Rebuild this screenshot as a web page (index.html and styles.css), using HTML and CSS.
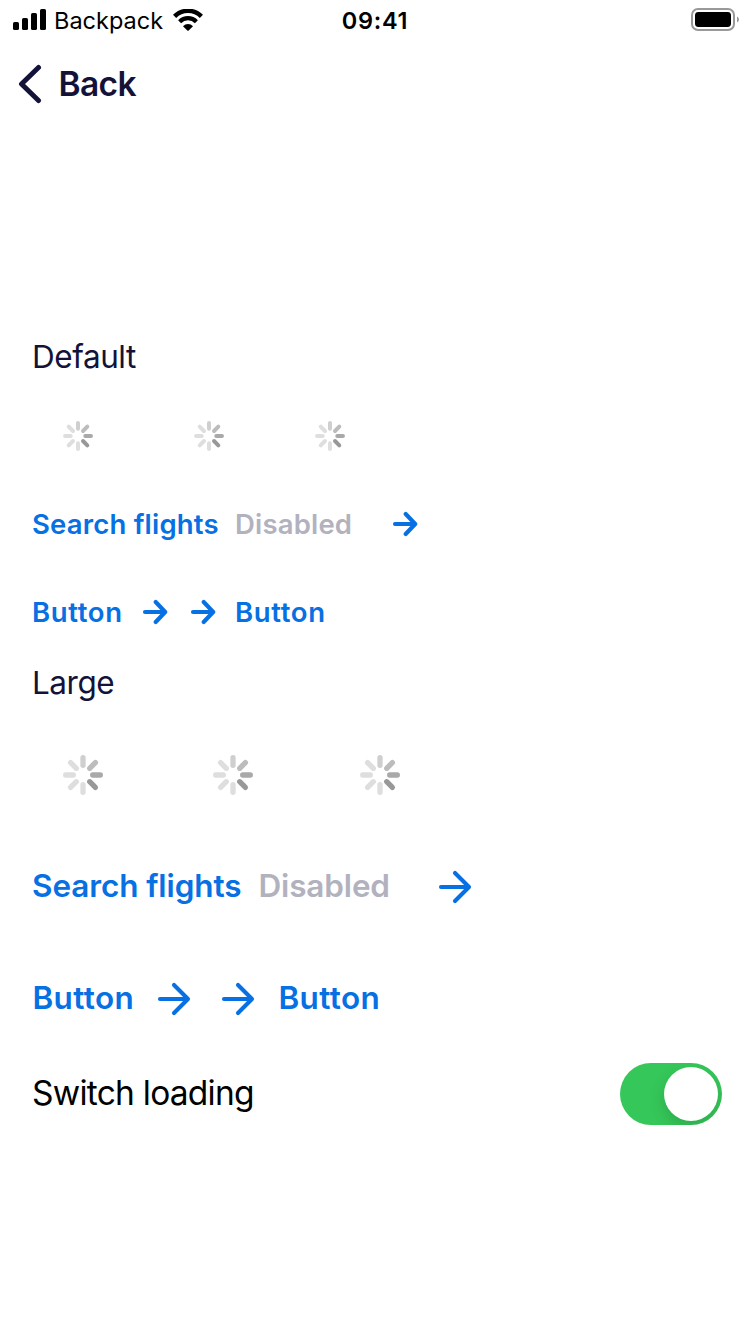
FILE: index.html
```html
<!DOCTYPE html>
<html lang="en">
<head>
<meta charset="utf-8">
<title>Buttons</title>
<link rel="stylesheet" href="styles.css">
</head>
<body>
<svg class="defs" width="0" height="0">
  <symbol id="arrow-small" viewBox="0 0 26 26">
    <path d="M3 13H22.5M13.7 3L23.2 13L13.7 23" fill="none" stroke="currentColor" stroke-width="4.1" stroke-linecap="round" stroke-linejoin="round"/>
  </symbol>
  <symbol id="arrow-large" viewBox="0 0 34 34">
    <path d="M3 17H30.5M17 3L31 17L17 31" fill="none" stroke="currentColor" stroke-width="4.1" stroke-linecap="round" stroke-linejoin="round"/>
  </symbol>
  <symbol id="spinner" viewBox="0 0 40 40">
    <g stroke-width="5.3" stroke-linecap="round">
      <path d="M20 2.7V10.3" stroke="#cfcfd0"/>
      <path d="M32.4 7.6L26.7 13.3" stroke="#bcbcbd"/>
      <path d="M37.3 20H29.7" stroke="#a9a9aa"/>
      <path d="M32.4 32.4L26.7 26.7" stroke="#989899"/>
      <path d="M20 37.3V29.7" stroke="#dededf"/>
      <path d="M7.6 32.4L13.3 26.7" stroke="#dededf"/>
      <path d="M2.7 20H10.3" stroke="#dededf"/>
      <path d="M7.6 7.6L13.3 13.3" stroke="#dededf"/>
    </g>
  </symbol>
</svg>

<header class="status">
  <div class="carrier">
    <svg width="34" height="22" viewBox="0 0 34 22">
      <rect x="0" y="13" width="6" height="8" rx="1.6"/>
      <rect x="9" y="9" width="6" height="12" rx="1.6"/>
      <rect x="18" y="4" width="6" height="17" rx="1.6"/>
      <rect x="27" y="0" width="6" height="21" rx="1.6"/>
    </svg>
    <span class="carrier-name">Backpack</span>
    <svg class="wifi" width="30" height="22" viewBox="0 0 30 22">
      <path d="M1.6 7.4A18.8 18.8 0 0 1 28.4 7.4" fill="none" stroke="#000" stroke-width="4.4"/>
      <path d="M6.6 12.7A11.8 11.8 0 0 1 23.4 12.7" fill="none" stroke="#000" stroke-width="4.2"/>
      <path d="M10 17.2A6.9 6.9 0 0 1 20 17.2L15.7 21.5Q15 22 14.3 21.5Z"/>
    </svg>
  </div>
  <span class="clock">09:41</span>
  <svg class="battery" width="49" height="24" viewBox="0 0 49 24">
    <rect x="1" y="1" width="42" height="21" rx="6" fill="none" stroke="#999" stroke-width="2"/>
    <rect x="4" y="4" width="36" height="15" rx="3.4"/>
    <path d="M46 8.5Q48 9.4 48 11.5T46 14.5Z" fill="#999"/>
  </svg>
</header>

<nav class="nav">
  <svg width="26" height="40" viewBox="0 0 26 40">
    <path d="M21.5 3.5L4.5 20L21.5 36.5" fill="none" stroke="currentColor" stroke-width="5" stroke-linecap="round" stroke-linejoin="round"/>
  </svg>
  <span class="back">Back</span>
</nav>

<main class="content">
  <h2 class="heading heading-default">Default</h2>
  <section class="group group-default">
    <div class="row spinners">
      <svg class="spinner"><use href="#spinner"/></svg>
      <svg class="spinner"><use href="#spinner"/></svg>
      <svg class="spinner"><use href="#spinner"/></svg>
    </div>
    <div class="row">
      <span class="link search">Search flights</span>
      <span class="link disabled">Disabled</span>
      <svg class="arrow lone"><use href="#arrow-small"/></svg>
    </div>
    <div class="row">
      <span class="link button">Button</span>
      <svg class="arrow"><use href="#arrow-small"/></svg>
      <svg class="arrow second"><use href="#arrow-small"/></svg>
      <span class="link button">Button</span>
    </div>
  </section>
  <h2 class="heading heading-large">Large</h2>
  <section class="group group-large">
    <div class="row spinners">
      <svg class="spinner"><use href="#spinner"/></svg>
      <svg class="spinner"><use href="#spinner"/></svg>
      <svg class="spinner"><use href="#spinner"/></svg>
    </div>
    <div class="row">
      <span class="link search">Search flights</span>
      <span class="link disabled">Disabled</span>
      <svg class="arrow lone"><use href="#arrow-large"/></svg>
    </div>
    <div class="row">
      <span class="link button">Button</span>
      <svg class="arrow"><use href="#arrow-large"/></svg>
      <svg class="arrow second"><use href="#arrow-large"/></svg>
      <span class="link button">Button</span>
    </div>
  </section>
  <div class="switch-row">
    <span class="switch-label">Switch loading</span>
    <span class="switch"><span class="knob"></span></span>
  </div>
</main>
</body>
</html>
```
FILE: styles.css
```css
* { box-sizing: border-box; }
body {
  margin: 0;
  width: 750px;
  height: 1334px;
  overflow: hidden;
  background: #fff;
  color: #000;
  font-family: Inter, "Liberation Sans", sans-serif;
  white-space: nowrap;
}
svg { display: block; flex: none; }
.defs { position: absolute; }

.status {
  display: grid;
  grid-template-columns: 1fr auto 1fr;
  align-items: center;
  height: 40px;
  padding: 0 10px 0 13px;
}
.carrier { display: flex; align-items: center; }
.carrier-name { width: 125.5px; padding-left: 7px; font-size: 23.5px; letter-spacing: 0; }
.clock { padding-right: 3px; font-size: 23.5px; font-weight: 600; letter-spacing: 0.7px; }
.battery { justify-self: end; }

.nav {
  display: flex;
  align-items: center;
  height: 88px;
  padding-left: 17px;
  color: #13133a;
}
.back { margin-left: 15.5px; font-size: 33.5px; font-weight: 600; letter-spacing: -0.6px; }

.content { padding: 208px 28px 0 32px; }
.heading {
  display: flex;
  align-items: center;
  margin: 0;
  padding-bottom: 2px;
  color: #13133a;
  font-size: 31.5px;
  font-weight: 400;
  letter-spacing: -0.45px;
}
.heading-default { height: 42px; margin-bottom: 14px; }
.heading-large { height: 42px; margin: 6px 0 15px; }

.row { display: flex; align-items: center; }
.link { flex: none; color: #0770e3; font-weight: 600; }
.arrow { color: #0770e3; }
.disabled { color: #b2b2bf; }

.group-default .row { height: 88px; font-size: 27.5px; }
.group-default .spinners { padding-left: 31px; }
.group-default .spinner { width: 30px; height: 30px; }
.group-default .spinner:nth-child(2) { margin-left: 101px; }
.group-default .spinner:nth-child(3) { margin-left: 91px; }
.group-default .search { width: 203px; letter-spacing: 0.2px; }
.group-default .disabled { width: 157px; letter-spacing: 0.18px; }
.group-default .button { width: 110px; letter-spacing: 0.65px; }
.group-default .arrow { width: 26px; height: 26px; }
.group-default .second { margin: 0 19px 0 22px; }

.group-large .row { height: 112px; font-size: 31.5px; }
.group-large .link { padding-bottom: 3px; }
.group-large .spinners { padding-left: 31px; }
.group-large .spinner { width: 40px; height: 40px; }
.group-large .spinner:nth-child(2) { margin-left: 110px; }
.group-large .spinner:nth-child(3) { margin-left: 107px; }
.group-large .search { width: 226.5px; letter-spacing: -0.1px; }
.group-large .disabled { width: 179.5px; letter-spacing: -0.15px; }
.group-large .button { width: 125px; padding-left: 0.5px; letter-spacing: 0.35px; }
.group-large .arrow { width: 34px; height: 34px; }
.group-large .second { margin: 0 23px 0 30px; }

.switch-row {
  display: flex;
  align-items: center;
  justify-content: space-between;
  height: 78px;
}
.switch-label { padding-bottom: 2px; font-size: 33.5px; letter-spacing: -0.75px; }
.switch {
  display: flex;
  justify-content: flex-end;
  width: 102px;
  height: 62px;
  padding: 4px;
  border-radius: 31px;
  background: #35c759;
  overflow: hidden;
}
.knob {
  width: 54px;
  height: 54px;
  border-radius: 50%;
  background: #fff;
  box-shadow: 0 6px 16px rgba(0, 0, 0, 0.15);
}
```
